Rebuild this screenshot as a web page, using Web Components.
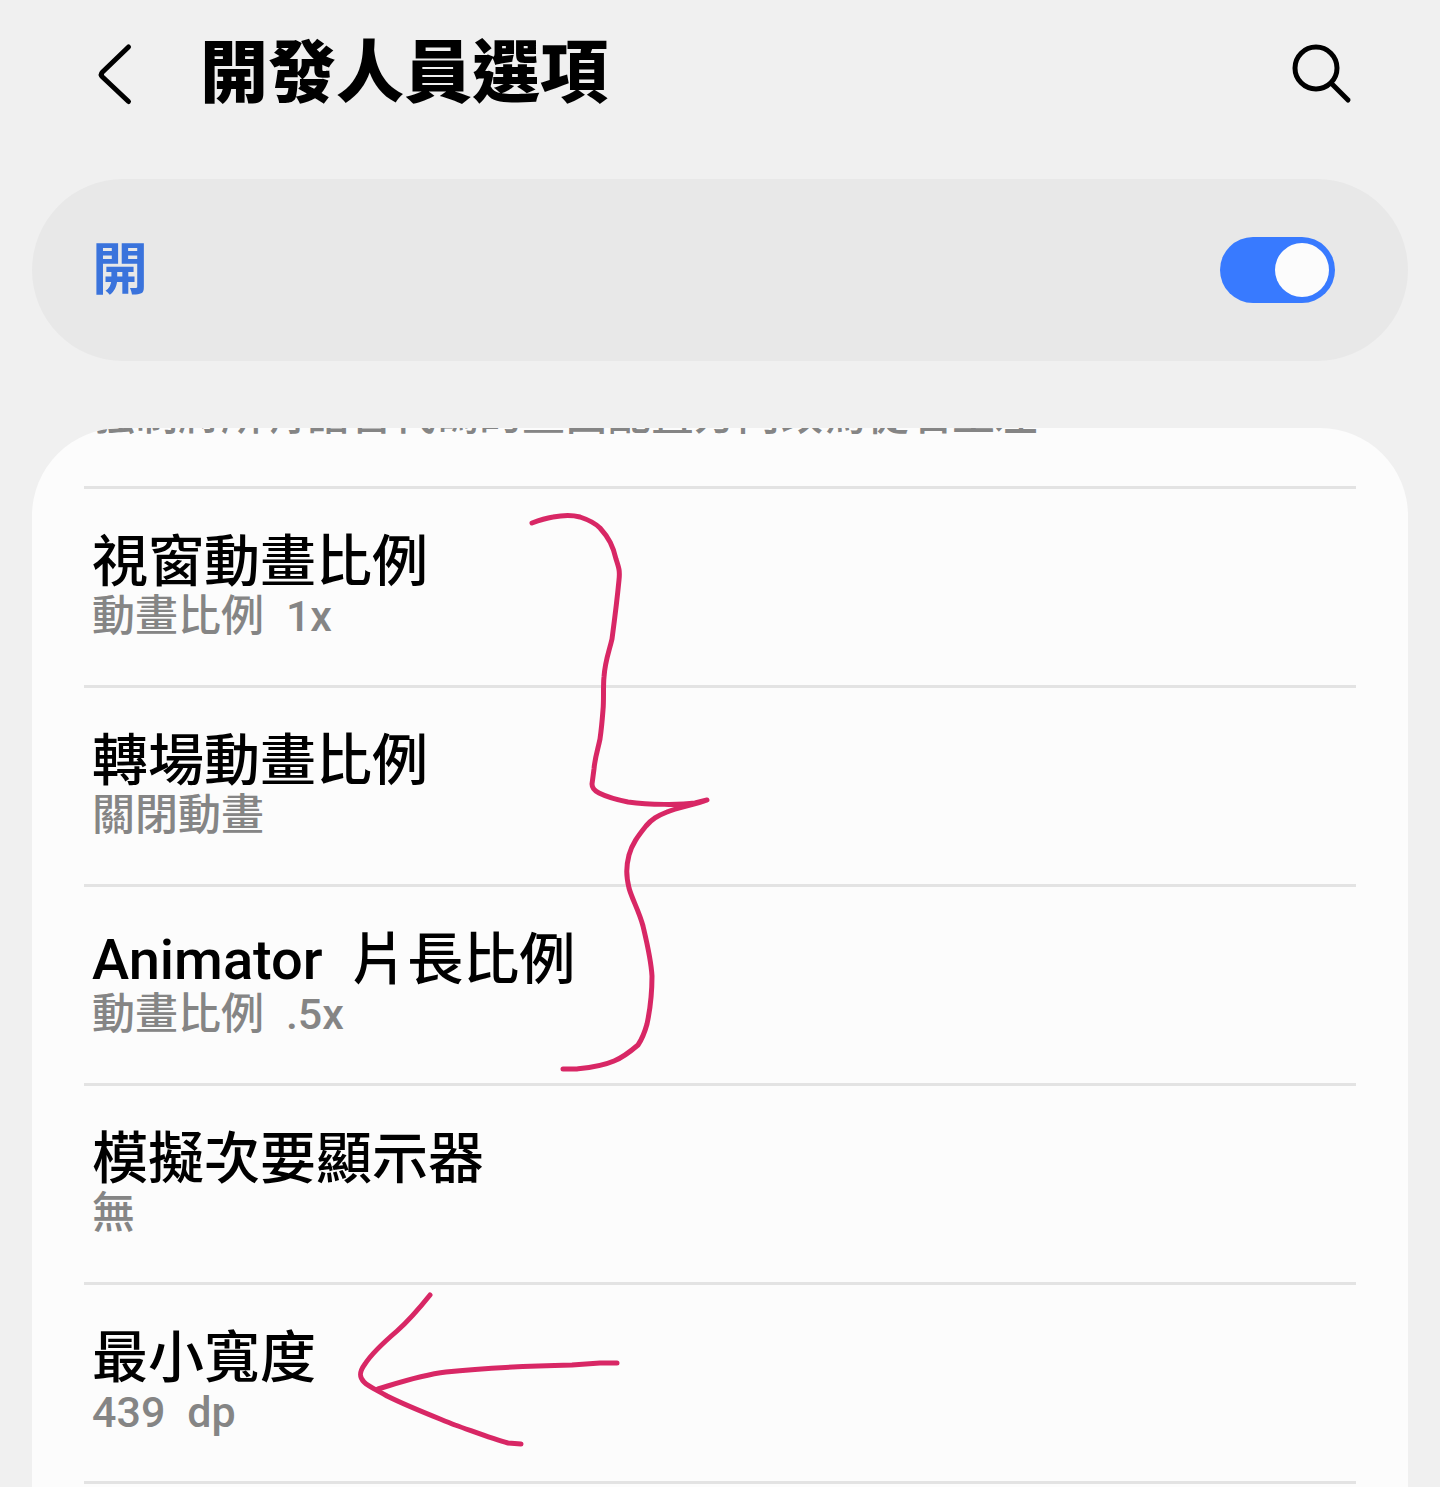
<!DOCTYPE html>
<html lang="zh-Hant">
<head>
<meta charset="utf-8">
<meta name="viewport" content="width=device-width, initial-scale=1">
<title>開發人員選項</title>
<style>
  body {
    margin: 0;
    background-color: #f0f0f0;
    color: #000;
    font-family: Roboto, "Noto Sans CJK TC", sans-serif;
  }
</style>
</head>
<body>
<settings-page>
  <app-header slot="header">開發人員選項</app-header>
  <main-switch slot="switch">開</main-switch>
  <setting-row tail><span slot="summary">強制將所有語言代碼的畫面配置方向改為從右至左</span></setting-row>
  <setting-row>視窗動畫比例<span slot="summary">動畫比例&ensp;1x</span></setting-row>
  <setting-row>轉場動畫比例<span slot="summary">關閉動畫</span></setting-row>
  <setting-row>Animator&ensp;片長比例<span slot="summary">動畫比例&ensp;.5x</span></setting-row>
  <setting-row>模擬次要顯示器<span slot="summary">無</span></setting-row>
  <setting-row>最小寬度<span slot="summary">439&ensp;dp</span></setting-row>
  <ink-notes slot="notes"></ink-notes>
</settings-page>

<script>
function define(name, html) {
  const template = document.createElement("template");
  template.innerHTML = html;
  customElements.define(name, class extends HTMLElement {
    constructor() {
      super();
      this.attachShadow({ mode: "open" });
      this.shadowRoot.appendChild(template.content.cloneNode(true));
    }
  });
}

define("settings-page", /*html*/ `
  <style>
    :host {
      position: relative;
      display: flex;
      flex-direction: column;
      box-sizing: border-box;
      height: 100vh;
      padding: 0 32px;
      overflow: hidden;
    }

    main {
      flex: 1;
      min-height: 0;
      margin-top: 67px;
      padding: 0 52px;
      border-radius: 88px 88px 0 0;
      background-color: #fcfcfc;
      overflow: hidden;
    }
  </style>
  <slot name="header"></slot>
  <slot name="switch"></slot>
  <main><slot></slot></main>
  <slot name="notes"></slot>`);

define("app-header", /*html*/ `
  <style>
    :host {
      display: block;
      padding-bottom: 31px;
    }

    header {
      display: flex;
      align-items: center;
      height: 148px;
      padding: 0 50px;
    }

    h1 {
      flex: 1;
      margin: 0 0 0 52px;
      font-size: 68px;
      line-height: 80px;
      font-weight: 900;
    }

    button {
      display: flex;
      padding: 0;
      border: none;
      background: none;
      color: inherit;
    }

    svg {
      fill: none;
      stroke: currentColor;
      stroke-width: 5;
      stroke-linecap: round;
      stroke-linejoin: round;
    }
  </style>
  <header>
    <button aria-label="返回">
      <svg width="66" height="66" viewBox="0 0 66 66"><path d="M46.500 6 L20.500 31 Q18 33.500 20.500 36 L46.500 60.500"/></svg>
    </button>
    <h1><slot></slot></h1>
    <button aria-label="搜尋">
      <svg width="66" height="66" viewBox="0 0 66 66"><circle cx="24" cy="27" r="21"/><path d="M39.500 42.500 L56 59"/></svg>
    </button>
  </header>`);

define("main-switch", /*html*/ `
  <style>
    :host {
      display: block;
      border-radius: 91px;
      background-color: #e8e8e8;
    }

    label {
      display: flex;
      align-items: center;
      justify-content: space-between;
      height: 182px;
      padding: 0 73px 0 60px;
      color: #3a73dc;
      font-size: 56px;
      line-height: 64px;
      font-weight: 700;
    }

    input {
      appearance: none;
      display: flex;
      box-sizing: border-box;
      width: 115px;
      height: 66px;
      margin: 0;
      padding: 6px;
      border-radius: 33px;
      background-color: #b0b0b0;
    }

    input::before {
      content: "";
      width: 54px;
      height: 54px;
      border-radius: 50%;
      background-color: #fcfcfc;
    }

    input:checked {
      justify-content: flex-end;
      background-color: #387aff;
    }
  </style>
  <label><slot></slot><input type="checkbox" role="switch" checked></label>`);

define("setting-row", /*html*/ `
  <style>
    :host {
      display: flex;
      flex-direction: column;
      box-sizing: border-box;
      height: 199px;
      padding: 46px 8px 0;
      border-bottom: 3px solid #e3e3e3;
      font-size: 56px;
      line-height: 54px;
      font-weight: 500;
      white-space: nowrap;
    }

    /* row scrolled under the top edge of the card */
    :host([tail]) {
      justify-content: flex-end;
      height: 61px;
      padding: 0 8px 44px;
    }

    :host([tail]) .title {
      display: none;
    }

    .summary {
      color: #858585;
      font-size: 43px;
    }
  </style>
  <div class="title"><slot></slot></div>
  <div class="summary"><slot name="summary"></slot></div>`);

/* hand-drawn brace and arrow over the list */
define("ink-notes", /*html*/ `
  <style>
    :host {
      position: absolute;
      top: 0;
      left: 0;
      pointer-events: none;
    }

    svg {
      display: block;
      fill: none;
      stroke: #d82765;
      stroke-width: 5;
      stroke-linecap: round;
      stroke-linejoin: round;
    }
  </style>
  <svg width="740" height="1480" viewBox="0 0 740 1480" aria-hidden="true">
    <path d="M532 523 C540 520 547 518 553 517 C563 515 573 515 580 517 C589 520 595 523 600 528 C609 538 613 546 616 559 C619 568 620 571 619 580 C617 601 614 624 612 639 C609 652 605 661 604 677 C603 686 604 700 603 710 C602 723 601 732 600 739 C598 749 595 757 594 769 L592 784 C592 788 595 791 599 793 C607 797 618 800 628 802 C650 805 681 805 695 803 L707 800 C695 805 678 807 667 812 C657 816 652 819 646 826 C638 836 632 844 629 855 C626 867 626 875 629 888 C632 899 639 911 643 926 C647 943 651 959 652 976 C652 995 650 1010 647 1024 C644 1035 642 1039 638 1045 C631 1051 624 1057 614 1061 C600 1067 586 1068 576 1069 L563 1069"/>
    <path d="M430 1295 C418 1310 406 1323 397 1331 C383 1343 372 1353 365 1364 C359 1372 359 1377 364 1382 C369 1387 377 1390 387 1396 C409 1407 433 1416 455 1425 C475 1432 493 1439 508 1443 L521 1444"/>
    <path d="M378 1389 C401 1382 421 1375 446 1372 C481 1368 529 1366 572 1365 L600 1363 L617 1363"/>
  </svg>`);
</script>
</body>
</html>
